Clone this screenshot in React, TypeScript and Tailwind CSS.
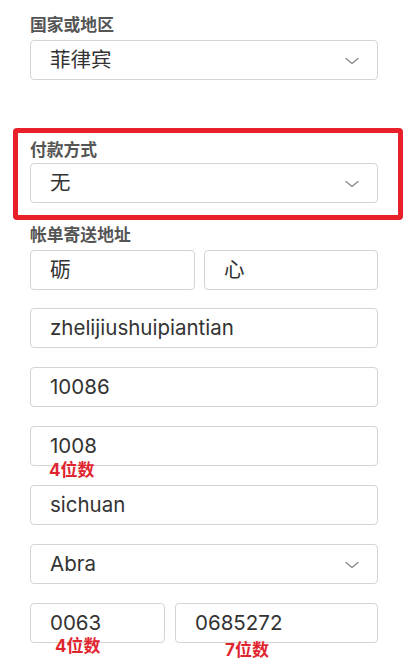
import React from "react";

const Chevron = () => (
  <svg width="16" height="10" viewBox="0 0 16 10" className="absolute right-[17px] top-[15px]" fill="none">
    <path d="M2 2.5 L8 7.5 L14 2.5" stroke="#8a8a8a" strokeWidth="1.3" strokeLinecap="round" strokeLinejoin="round" />
  </svg>
);

const Field = ({ value, select = false, className = "", children }: { value: string; select?: boolean; className?: string; children?: React.ReactNode }) => (
  <div className={`relative h-[40px] rounded-[4px] border border-[#d4d4d4] bg-white flex items-center pl-[19px] ${className}`}>
    <span className="text-[20.5px] text-[#333] leading-none">{value}</span>
    {select && <Chevron />}
    {children}
  </div>
);

const Label = ({ text }: { text: string }) => (
  <div className="text-[16.8px] font-bold text-[#555] leading-[20px]">{text}</div>
);

const Note = ({ text, className }: { text: string; className: string }) => (
  <span className={`absolute text-[17px] font-bold text-[#e0252f] leading-none ${className}`}>{text}</span>
);

export default function App() {
  return (
    <div
      className="w-[405px] h-[670px] bg-white overflow-hidden"
      style={{ fontFamily: '"Inter", "Noto Sans CJK SC", sans-serif' }}
    >
      <div className="pt-[15px] pl-[30px] w-[378px]">
        <Label text="国家或地区" />
        <Field value="菲律宾" select className="mt-[5px]" />
      </div>

      <div className="mt-[48px] ml-[13px] w-[390px] h-[92px] border-[5px] border-[#e8202a] rounded-[4px] pl-[12px] pr-[20px] pt-[7px]">
        <Label text="付款方式" />
        <Field value="无" select className="mt-[3px]" />
      </div>

      <div className="pl-[30px] w-[378px] pt-[5px]">
        <Label text="帐单寄送地址" />
        <div className="mt-[5px] flex gap-[9px]">
          <Field value="砺" className="w-[165px]" />
          <Field value="心" className="flex-1" />
        </div>
        <div className="mt-[18px] flex flex-col gap-[19px]">
          <Field value="zhelijiushuipiantian" />
          <Field value="10086" />
          <Field value="1008">
            <Note text="4位数" className="left-[18px] top-[35px]" />
          </Field>
          <Field value="sichuan" />
          <Field value="Abra" select />
          <div className="flex gap-[10px]">
            <Field value="0063" className="w-[135px]">
              <Note text="4位数" className="left-[24px] top-[34px]" />
            </Field>
            <Field value="0685272" className="flex-1">
              <Note text="7位数" className="left-[49px] top-[38px]" />
            </Field>
          </div>
        </div>
      </div>
    </div>
  );
}
